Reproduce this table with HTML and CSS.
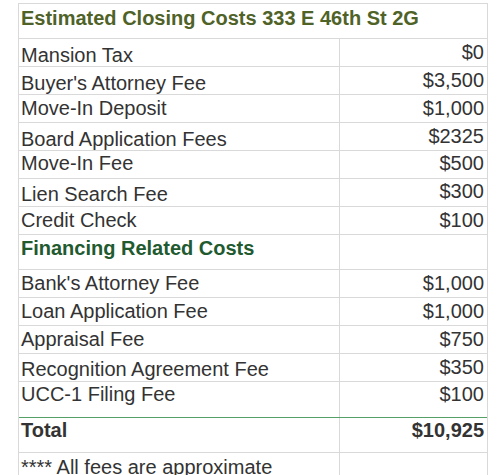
FILE: index.html
```html
<!DOCTYPE html>
<html>
<head>
<meta charset="utf-8">
<link rel="stylesheet" href="styles.css">
</head>
<body>
<div class="sheet">
  <div class="row h35 title-row">
    <div class="cell full p4 title">Estimated Closing Costs 333 E 46th St 2G</div>
  </div>
  <div class="row h28">
    <div class="cell p6">Mansion Tax</div><div class="cell num p3">$0</div>
  </div>
  <div class="row h28">
    <div class="cell p6">Buyer's Attorney Fee</div><div class="cell num p3">$3,500</div>
  </div>
  <div class="row h28">
    <div class="cell p3">Move-In Deposit</div><div class="cell num p3">$1,000</div>
  </div>
  <div class="row h28">
    <div class="cell p6">Board Application Fees</div><div class="cell num p3">$2325</div>
  </div>
  <div class="row h28">
    <div class="cell p2">Move-In Fee</div><div class="cell num p2">$500</div>
  </div>
  <div class="row h28">
    <div class="cell p5">Lien Search Fee</div><div class="cell num p2">$300</div>
  </div>
  <div class="row h28">
    <div class="cell p3">Credit Check</div><div class="cell num p3">$100</div>
  </div>
  <div class="row h35">
    <div class="cell p3 section">Financing Related Costs</div><div class="cell num p0"></div>
  </div>
  <div class="row h28">
    <div class="cell p3">Bank's Attorney Fee</div><div class="cell num p3">$1,000</div>
  </div>
  <div class="row h28">
    <div class="cell p3">Loan Application Fee</div><div class="cell num p3">$1,000</div>
  </div>
  <div class="row h28">
    <div class="cell p3">Appraisal Fee</div><div class="cell num p3">$750</div>
  </div>
  <div class="row h28">
    <div class="cell p5">Recognition Agreement Fee</div><div class="cell num p3">$350</div>
  </div>
  <div class="row h36 pre-total">
    <div class="cell p2">UCC-1 Filing Fee</div><div class="cell num p2">$100</div>
  </div>
  <div class="row h35 total">
    <div class="cell p2">Total</div><div class="cell num p2">$10,925</div>
  </div>
  <div class="row h35 foot">
    <div class="cell p4">**** All fees are approximate</div><div class="cell num p0"></div>
  </div>
</div>
</body>
</html>
```

FILE: styles.css
```css
html, body {
  margin: 0;
  padding: 0;
  background: #ffffff;
}

body {
  font-family: "Liberation Sans", Arial, sans-serif;
  font-size: 20px;
  line-height: 20px;
  color: #333333;
  overflow: hidden;
}

.sheet {
  margin: 3px 0 0 18px;
  width: 470px;
  box-sizing: border-box;
  border-top: 1px solid #d9d9d9;
  border-left: 1px solid #d9d9d9;
  border-right: 1px solid #d9d9d9;
}

.row {
  display: grid;
  grid-template-columns: 320px 1fr;
  box-sizing: border-box;
  border-bottom: 1px solid #d9d9d9;
}

.title-row {
  grid-template-columns: 1fr;
}

.h28 { height: 28px; }
.h35 { height: 35px; }
.h36 { height: 36px; }

.cell {
  padding-left: 2px;
  padding-right: 3px;
  white-space: nowrap;
  box-sizing: border-box;
}

.cell.num {
  text-align: right;
  border-left: 1px solid #d9d9d9;
}

.p0 { padding-top: 0; }
.p2 { padding-top: 2px; }
.p3 { padding-top: 3px; }
.p4 { padding-top: 4px; }
.p5 { padding-top: 5px; }
.p6 { padding-top: 6px; }

.title {
  font-weight: bold;
  color: #4f6228;
}

.section {
  font-weight: bold;
  color: #225a30;
}

.pre-total {
  border-bottom-color: #55a066;
}

.total {
  font-weight: bold;
}

.foot {
  border-bottom: none;
}
```
